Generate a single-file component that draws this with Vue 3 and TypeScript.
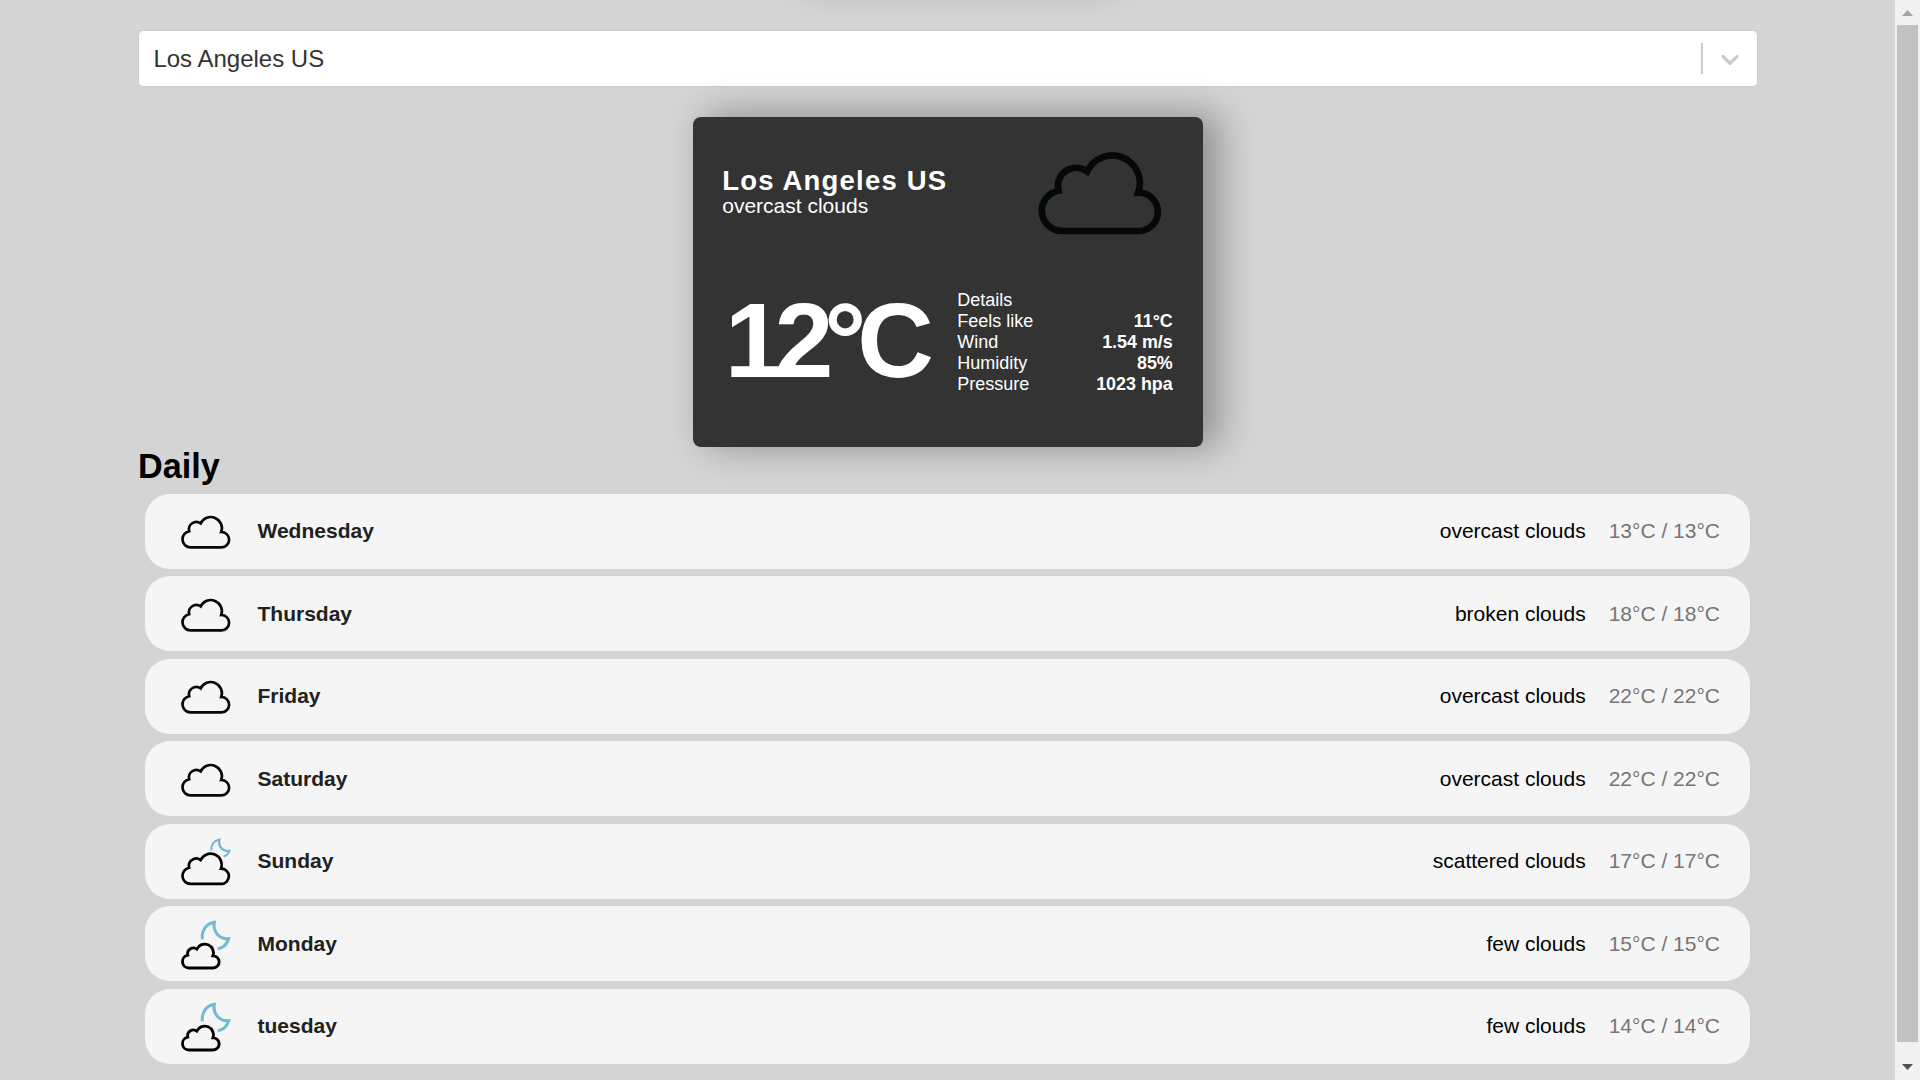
<script setup lang="ts">
import { ref } from 'vue'
type Icon = 'cloud' | 'scattered' | 'few'
interface Day { name: string; icon: Icon; description: string; temp: string }
const city = ref('Los Angeles US')
const days: Day[] = [
  { name: 'Wednesday', icon: 'cloud', description: 'overcast clouds', temp: '13°C / 13°C' },
  { name: 'Thursday', icon: 'cloud', description: 'broken clouds', temp: '18°C / 18°C' },
  { name: 'Friday', icon: 'cloud', description: 'overcast clouds', temp: '22°C / 22°C' },
  { name: 'Saturday', icon: 'cloud', description: 'overcast clouds', temp: '22°C / 22°C' },
  { name: 'Sunday', icon: 'scattered', description: 'scattered clouds', temp: '17°C / 17°C' },
  { name: 'Monday', icon: 'few', description: 'few clouds', temp: '15°C / 15°C' },
  { name: 'tuesday', icon: 'few', description: 'few clouds', temp: '14°C / 14°C' },
]
const details = [
  { label: 'Feels like', value: '11°C' },
  { label: 'Wind', value: '1.54 m/s' },
  { label: 'Humidity', value: '85%' },
  { label: 'Pressure', value: '1023 hpa' },
]
const cloud = 'M71 237A61 61 0 0 1 61 116A55 55 0 0 1 147 58A83 83 0 0 1 300 122A57.5 57.5 0 0 1 303 237Z'
</script>

<template>
  <div class="page">
    <main class="content">
      <div class="above"></div>
      <div class="select">
        <span class="select-value">{{ city }}</span>
        <span class="separator"></span>
        <svg class="chevron" viewBox="0 0 20 20"><path d="M4.516 7.548c0.436-0.446 1.043-0.481 1.576 0l3.908 3.747 3.908-3.747c0.533-0.481 1.141-0.446 1.574 0 0.436 0.445 0.408 1.197 0 1.615-0.406 0.418-4.695 4.502-4.695 4.502-0.217 0.223-0.502 0.335-0.787 0.335s-0.57-0.112-0.789-0.335c0 0-4.287-4.084-4.695-4.502s-0.436-1.17 0-1.615z" /></svg>
      </div>
      <section class="card">
        <div class="card-top">
          <div>
            <p class="city">{{ city }}</p>
            <p class="description">overcast clouds</p>
          </div>
          <svg class="card-icon" viewBox="0 0 371 246"><path class="cloud" :d="cloud" stroke-width="20" /></svg>
        </div>
        <div class="card-bottom">
          <p class="temperature">12°C</p>
          <dl class="details">
            <div class="detail"><dt>Details</dt></div>
            <div v-for="d in details" :key="d.label" class="detail">
              <dt>{{ d.label }}</dt><dd>{{ d.value }}</dd>
            </div>
          </dl>
        </div>
      </section>
      <h2 class="heading">Daily</h2>
      <div class="days">
        <article v-for="day in days" :key="day.name" class="day">
          <svg class="day-icon" viewBox="0 0 150 150">
            <path v-if="day.icon === 'cloud'" class="cloud" :d="cloud" transform="translate(0 26) scale(.402)" stroke-width="20" />
            <template v-else-if="day.icon === 'scattered'">
              <path class="cloud dark" :d="cloud" transform="translate(0 46) scale(.4)" stroke-width="20" />
              <path class="moon" d="M91 40C90 24 99 11 115 8C112 28 123 44 145 42C142 51 136 56 128 58" stroke-width="7" />
            </template>
            <template v-else>
              <path class="cloud dark" :d="cloud" transform="translate(1 69) scale(.316)" stroke-width="27" />
              <path class="moon" d="M64 58C61 32 75 11 100 7C95 35 114 58 143 56C137 74 127 84 110 86" stroke-width="9" />
            </template>
          </svg>
          <span class="name">{{ day.name }}</span>
          <span class="weather">{{ day.description }}</span>
          <span class="temps">{{ day.temp }}</span>
        </article>
      </div>
    </main>
    <aside class="scrollbar">
      <svg class="arrow" viewBox="0 0 25 25"><path d="M12.5 10L18 16H7Z" fill="#a3a3a3" /></svg>
      <div class="thumb"></div>
      <svg class="arrow down" viewBox="0 0 25 25"><path d="M7 9H18L12.5 15Z" fill="#505050" /></svg>
    </aside>
  </div>
</template>

<style>
html, body { margin: 0; overflow: hidden; }
</style>
<style scoped>
* { box-sizing: border-box; }
p, h2, dl, dd { margin: 0; }
.page { display: flex; width: 1920px; height: 1080px; overflow: hidden; background: #d4d4d4; font-family: "Liberation Sans", Arial, sans-serif; }
.content { position: relative; flex: 1; padding: 30px 137.5px 0 138px; display: flex; flex-direction: column; }
.above { position: absolute; left: 796px; top: -56px; width: 304px; height: 40px; border-radius: 8px; box-shadow: 12.5px -2.5px 34px 2.5px rgba(0,0,0,.3); }
.select { display: flex; align-items: center; height: 57px; padding: 0 12px 0 14.4px; border: 1px solid #ccc; border-radius: 5px; background: #fff; }
.select-value { flex: 1; font-size: 24px; color: #333; line-height: 28px; }
.separator { width: 2px; height: 31px; background: #ccc; margin-right: 12px; }
.chevron { width: 30px; height: 30px; fill: #ccc; }
.card { align-self: center; width: 510px; height: 330px; margin-top: 30px; padding: 30px 30px 0 30px; border-radius: 8px; background: #333; color: #fff; box-shadow: 15px -2px 36px 2px rgba(0,0,0,.32); }
.card-top { display: flex; justify-content: space-between; padding-top: 5px; height: 130px; }
.city { margin: 14px 0 0 -.5px; font-size: 27.5px; font-weight: 700; letter-spacing: 1.2px; line-height: 29px; }
.description { margin-left: -.5px; font-size: 21px; line-height: 21px; }
.card-icon { width: 124px; height: 82px; margin: .2px 10.7px 0 0; overflow: visible; }
.card-bottom { display: flex; justify-content: space-between; padding-top: 13px; }
.temperature { font-size: 106px; font-weight: 700; letter-spacing: -9.3px; line-height: 101px; margin-left: 2px; }
.details { width: 215.5px; font-size: 18px; line-height: 21px; }
.detail { display: flex; justify-content: space-between; }
dd { font-size: 17.9px; font-weight: 700; }
.cloud { fill: none; stroke: #050808; }
.dark { stroke: #000; }
.moon { fill: none; stroke: #72b9d5; }
.heading { font-size: 34.2px; line-height: 38px; margin-bottom: 8.8px; color: #000; }
.days { display: flex; flex-direction: column; gap: 7.5px; padding: 0 7.5px 0 7px; }
.day { display: flex; align-items: center; height: 75px; padding: 0 30px 0 36px; border-radius: 25px; background: #f5f5f5; font-size: 21px; line-height: 24px; }
.day-icon { width: 50px; height: 50px; margin-top: 1.5px; overflow: visible; }
.name { flex: 1; margin-left: 26.5px; font-size: 21px; font-weight: 700; color: #212121; }
.weather { margin-right: 23px; color: #000; }
.temps { color: #757575; }
.scrollbar { width: 25px; display: flex; flex-direction: column; background: #f1f1f1; }
.arrow { display: block; width: 25px; height: 25px; }
.thumb { width: 21px; height: 1017px; margin-left: 2px; background: #c1c1c1; }
.down { margin-top: 13px; }
</style>
